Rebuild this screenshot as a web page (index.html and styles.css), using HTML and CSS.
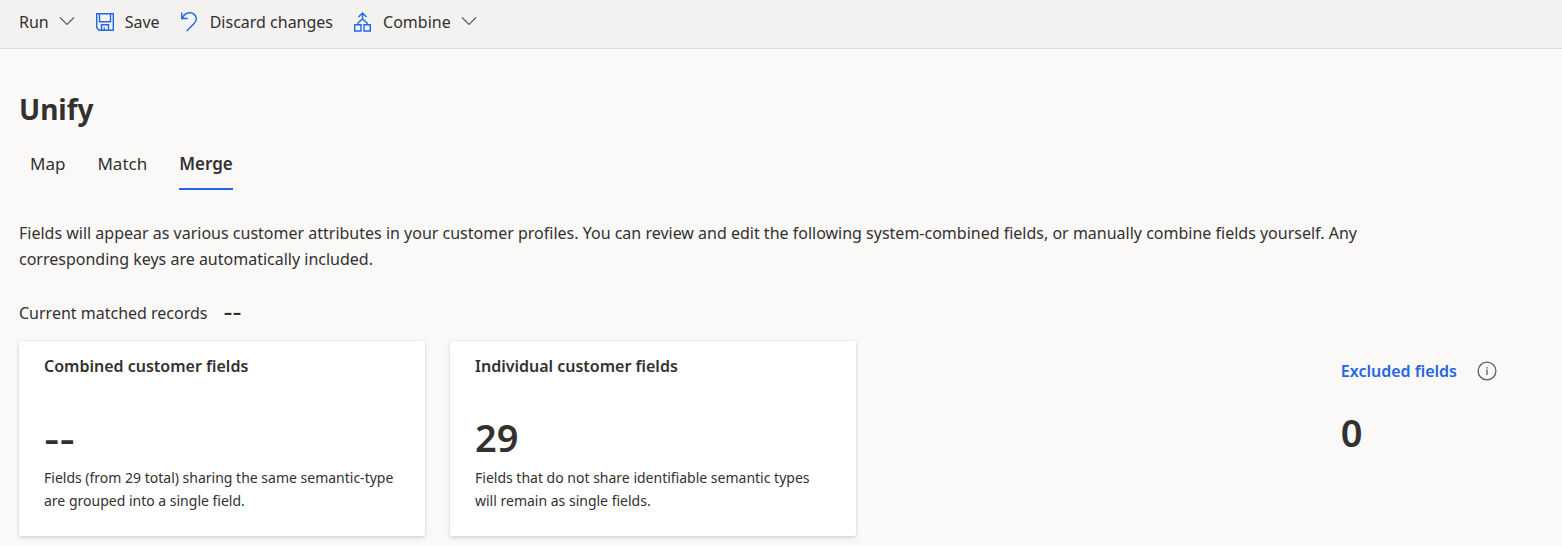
FILE: index.html
```html
<!DOCTYPE html>
<html lang="en">
<head>
<meta charset="utf-8">
<meta name="viewport" content="width=device-width, initial-scale=1">
<title>Unify</title>
<link rel="stylesheet" href="styles.css">
</head>
<body>
<header class="toolbar" role="toolbar" aria-label="Commands">
  <button class="command" type="button">Run
    <svg class="chevron" width="16" height="16" viewBox="0 0 16 16" aria-hidden="true"><path d="M1 3.500l7 7 7-7"/></svg>
  </button>
  <button class="command" type="button">
    <svg class="icon" width="20" height="20" viewBox="0 0 20 20" aria-hidden="true"><path d="M1.700 1.700h16.600v16.600H4.200l-2.500-2.500zM4.500 1.700v8h11v-8M6.500 18.300v-5.600h7v5.600M9.300 18v-2.500"/></svg>
    Save
  </button>
  <button class="command" type="button">
    <svg class="icon" width="20" height="20" viewBox="0 0 20 20" aria-hidden="true"><path d="M1.700 .5v6h6M1.900 6.300C3.700 3 6.200.5 10.200.700c5.500.5 8 6.500 4.200 10.500L6.700 19"/></svg>
    Discard changes
  </button>
  <button class="command" type="button">
    <svg class="icon" width="20" height="20" viewBox="0 0 20 20" aria-hidden="true"><path d="M1.700 12.700h6.300v6.300H1.700zM11 12.700h6.300v6.300h-6.300zM9.500 1v6.500M5.500 5l4-4 4 4M4.900 12.500v-1.500L9.500 7l4.600 4v1.500"/></svg>
    Combine
    <svg class="chevron" width="16" height="16" viewBox="0 0 16 16" aria-hidden="true"><path d="M1 3.500l7 7 7-7"/></svg>
  </button>
</header>
<main class="page">
  <h1 class="title">Unify</h1>
  <div class="tabs" role="tablist" aria-label="Unify steps">
    <button class="tab" type="button" role="tab" aria-selected="false">Map</button>
    <button class="tab" type="button" role="tab" aria-selected="false">Match</button>
    <button class="tab tab-active" type="button" role="tab" aria-selected="true">Merge</button>
  </div>
  <p class="intro">Fields will appear as various customer attributes in your customer profiles. You can review and edit the following system-combined fields, or manually combine fields yourself. Any corresponding keys are automatically included.</p>
  <p class="records">Current matched records <strong class="records-value">--</strong></p>
  <div class="summary">
    <section class="card">
      <h2 class="card-title">Combined customer fields</h2>
      <p class="figure figure-empty">--</p>
      <p class="note">Fields (from 29 total) sharing the same semantic-type are grouped into a single field.</p>
    </section>
    <section class="card">
      <h2 class="card-title">Individual customer fields</h2>
      <p class="figure">29</p>
      <p class="note">Fields that do not share identifiable semantic types will remain as single fields.</p>
    </section>
    <section class="excluded">
      <div class="excluded-head">
        <a class="excluded-link" href="#excluded">Excluded fields</a>
        <button class="info" type="button" aria-label="About excluded fields">
          <svg width="20" height="20" viewBox="0 0 20 20" aria-hidden="true"><circle cx="10" cy="10" r="8.900"/><path d="M10 8.500v5.500M10 6v1.500"/></svg>
        </button>
      </div>
      <p class="figure">0</p>
    </section>
  </div>
</main>
</body>
</html>
```
FILE: styles.css
```css
* {
  box-sizing: border-box;
}

body {
  margin: 0;
  background: #faf9f8;
  color: #323130;
  font-family: "Segoe UI", "Noto Sans", "Open Sans", sans-serif;
  font-size: 16px;
  line-height: 26px;
}

h1, h2, p {
  margin: 0;
}

button {
  padding: 0;
  border: 0;
  background: none;
  color: inherit;
  font: inherit;
}

svg {
  display: block;
  flex: none;
  fill: none;
}

.toolbar {
  display: flex;
  gap: 20px;
  padding: 9px 19px 13px;
  border-bottom: 1px solid #e1dfdd;
  background: #f3f2f1;
}

.command {
  display: flex;
  align-items: center;
  gap: 10px;
}

.icon {
  stroke: #2266e3;
  stroke-width: 1.4;
}

.chevron {
  stroke: #605e5c;
  stroke-width: 1.2;
}

.page {
  padding: 40px 19px 10px;
}

.title {
  font-size: 28px;
  font-weight: 700;
  line-height: 40px;
}

.tabs {
  display: flex;
  gap: 32px;
  padding: 22px 11px 0;
  font-size: 17px;
}

.tab {
  padding-bottom: 11px;
  border-bottom: 2px solid transparent;
}

.tab-active {
  border-color: #2266e3;
  font-weight: 600;
}

.intro {
  max-width: 1400px;
  margin-top: 30px;
}

.records {
  display: flex;
  gap: 16px;
  margin-top: 28px;
}

.records-value {
  font-size: 28px;
  font-weight: 400;
  line-height: 20px;
}

.summary {
  display: flex;
  align-items: flex-start;
  gap: 25px;
  margin-top: 15px;
}

.card {
  flex: 0 1 406px;
  padding: 12px 24px 24px 25px;
  border-radius: 2px;
  background: #fff;
  box-shadow: 0 2px 4px rgba(0, 0, 0, 0.13), 0 0 2px rgba(0, 0, 0, 0.11);
}

.card-title {
  font-size: 16px;
  font-weight: 600;
}

.figure {
  margin-top: 32px;
  font-size: 38px;
  font-weight: 600;
  line-height: 52px;
}

.figure-empty {
  font-size: 48px;
  font-weight: 400;
}

.note {
  margin-top: 3px;
  font-size: 14px;
  line-height: 23px;
}

.excluded {
  margin-left: auto;
  padding: 17px 46px 0 0;
}

.excluded-head {
  display: flex;
  align-items: center;
  gap: 20px;
}

.excluded-link {
  color: #2266e3;
  font-weight: 600;
  text-decoration: none;
}

.excluded .figure {
  margin-top: 22px;
}

.info {
  stroke: #605e5c;
  stroke-width: 1.3;
}
```
